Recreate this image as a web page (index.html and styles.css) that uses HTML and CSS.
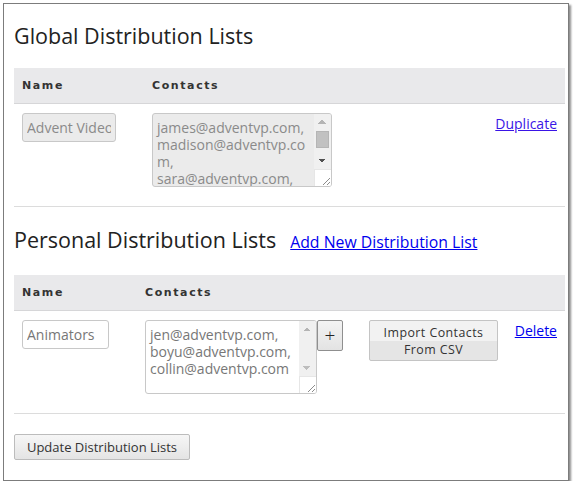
FILE: index.html
```html
<!DOCTYPE html>
<html lang="en">
<head>
<meta charset="utf-8">
<title>Distribution Lists</title>
<link rel="stylesheet" href="styles.css">
</head>
<body>
<div class="window">
  <section class="group">
    <div class="group-head">
      <h2 class="group-title">Global Distribution Lists</h2>
    </div>
    <div class="list list-global">
      <div class="list-header">
        <span class="col-label">Name</span>
        <span class="col-label">Contacts</span>
        <span></span>
      </div>
      <div class="list-row">
        <div class="cell"><input class="name-input" type="text" value="Advent Video Productions" disabled></div>
        <div class="cell">
          <div class="textbox textbox-disabled">
            <textarea class="contacts" disabled>james@adventvp.com, madison@adventvp.com, sara@adventvp.com, jen@adventvp.com, boyu@adventvp.com, collin@adventvp.com</textarea>
            <div class="scrollbar" aria-hidden="true">
              <span class="sb-btn sb-up"></span>
              <span class="sb-track"><span class="sb-thumb"></span></span>
              <span class="sb-btn sb-down sb-active"></span>
              <span class="sb-corner"><svg width="16" height="16" viewBox="0 0 16 16"><path d="M15 8 L8 15 M15 12 L12 15" stroke="#8c8c8c" stroke-width="1" fill="none"/></svg></span>
            </div>
          </div>
        </div>
        <div class="cell cell-action"><a class="action-link action-visited" href="#">Duplicate</a></div>
      </div>
    </div>
  </section>

  <hr class="divider">

  <section class="group">
    <div class="group-head">
      <h2 class="group-title">Personal Distribution Lists</h2>
      <a class="head-link" href="#">Add New Distribution List</a>
    </div>
    <div class="list list-personal">
      <div class="list-header">
        <span class="col-label">Name</span>
        <span class="col-label">Contacts</span>
        <span></span>
        <span></span>
      </div>
      <div class="list-row">
        <div class="cell"><input class="name-input" type="text" value="Animators"></div>
        <div class="cell contacts-cell">
          <div class="textbox textbox-open">
            <textarea class="contacts">jen@adventvp.com,
boyu@adventvp.com,
collin@adventvp.com</textarea>
            <div class="scrollbar" aria-hidden="true">
              <span class="sb-btn sb-up"></span>
              <span class="sb-track"></span>
              <span class="sb-btn sb-down"></span>
              <span class="sb-corner"><svg width="16" height="16" viewBox="0 0 16 16"><path d="M15 8 L8 15 M15 12 L12 15" stroke="#8c8c8c" stroke-width="1" fill="none"/></svg></span>
            </div>
          </div>
          <button class="btn btn-plus" type="button">+</button>
        </div>
        <div class="cell"><button class="btn btn-import" type="button"><span class="btn-line">Import Contacts</span><span class="btn-line">From CSV</span></button></div>
        <div class="cell cell-action"><a class="action-link" href="#">Delete</a></div>
      </div>
    </div>
  </section>

  <hr class="divider">

  <div class="footer">
    <button class="btn btn-update" type="button">Update Distribution Lists</button>
  </div>
</div>
</body>
</html>
```

FILE: styles.css
```css
html, body {
  margin: 0;
  padding: 0;
  background: #ffffff;
}

body {
  font-family: "Open Sans", "DejaVu Sans", sans-serif;
  color: #222;
}

.window {
  box-sizing: border-box;
  margin: 3px 0 0 3px;
  width: 566px;
  height: 478px;
  border: 1px solid #7c7c7c;
  box-shadow: 2px 2px 2px rgba(0, 0, 0, 0.45);
  background: #fff;
  padding: 18px 3px 0 10px;
}

.group-head {
  display: flex;
  align-items: baseline;
  gap: 14px;
}

.group-title {
  margin: 0;
  font-size: 21.5px;
  line-height: 28px;
  font-weight: 400;
  color: #222;
}

.head-link {
  font-size: 15.8px;
  color: #0000ee;
}

.list {
  margin-top: 18px;
}

.list-personal {
  margin-top: 21px;
}

.list-header,
.list-row {
  display: grid;
}

.list-global .list-header,
.list-global .list-row {
  grid-template-columns: 138px 180px 1fr;
}

.list-personal .list-header,
.list-personal .list-row {
  grid-template-columns: 131px 224px 129px 1fr;
}

.list-header {
  height: 36px;
  box-sizing: border-box;
  align-items: center;
  background: #e9e9eb;
  border-bottom: 1px solid #d6d6d8;
}

.col-label {
  font-family: "DejaVu Sans", sans-serif;
  font-size: 11px;
  font-weight: 700;
  letter-spacing: 1.6px;
  color: #333;
}

.list-header .col-label:first-child {
  padding-left: 8px;
}

.list-row {
  padding: 9px 0 19px;
  align-items: start;
}

.list-row .cell:first-child {
  padding-left: 8px;
}

.cell-action {
  text-align: right;
  padding-right: 8px;
  padding-top: 2px;
  line-height: 17px;
}

.action-link {
  font-size: 14px;
  color: #0000ee;
}

.action-visited {
  color: #3a14e6;
}

.name-input {
  box-sizing: border-box;
  height: 29px;
  padding: 0 4px;
  border: 1px solid #c8c8c8;
  border-radius: 3px;
  font-family: inherit;
  font-size: 14px;
  color: #777;
  background: #fff;
  outline: none;
}

.list-global .name-input {
  width: 94px;
  background: #ebebeb;
  color: #8a8a8a;
}

.list-personal .name-input {
  width: 87px;
}

/* textarea with drawn scrollbar */
.textbox {
  box-sizing: border-box;
  display: flex;
  height: 74px;
  border: 1px solid #c8c8c8;
  border-radius: 3px;
  overflow: hidden;
  background: #fff;
}

.textbox-disabled {
  width: 180px;
  background: #ebebeb;
}

.textbox-open {
  width: 172px;
}

.contacts {
  flex: 1;
  min-width: 0;
  box-sizing: border-box;
  height: 100%;
  margin: 0;
  padding: 5px 3px 0 4px;
  border: 0;
  background: transparent;
  font-family: inherit;
  font-size: 14px;
  line-height: 17px;
  color: #777;
  overflow: hidden;
  resize: none;
  outline: none;
}

.textbox-disabled .contacts {
  color: #8a8a8a;
}

.scrollbar {
  flex: 0 0 17px;
  display: flex;
  flex-direction: column;
  background: #f0f0f0;
}

.sb-btn {
  display: block;
  height: 17px;
  background-repeat: no-repeat;
}

.sb-up {
  background-image:
    linear-gradient(to top left, #b4b4b4 50%, transparent 50%),
    linear-gradient(to top right, #b4b4b4 50%, transparent 50%);
  background-size: 4px 4px, 4px 4px;
  background-position: 4px 6px, 8px 6px;
}

.sb-down {
  background-image:
    linear-gradient(to bottom left, #bdbdbd 50%, transparent 50%),
    linear-gradient(to bottom right, #bdbdbd 50%, transparent 50%);
  background-size: 4px 4px, 4px 4px;
  background-position: 4px 7px, 8px 7px;
}

.sb-down.sb-active {
  background-image:
    linear-gradient(to bottom left, #505050 50%, transparent 50%),
    linear-gradient(to bottom right, #505050 50%, transparent 50%);
}

.sb-track {
  display: block;
  height: 21px;
  padding: 0 2px;
}

.sb-thumb {
  display: block;
  height: 17px;
  background: #c1c1c1;
  border: 1px solid #b5b5b5;
  box-sizing: border-box;
}

.sb-corner {
  display: block;
  height: 17px;
  box-sizing: border-box;
  background: #fff;
  border-top: 1px solid #e6e6e6;
  border-left: 1px solid #e6e6e6;
}

.sb-corner svg {
  display: block;
}

.contacts-cell {
  display: flex;
  align-items: flex-start;
}

.btn {
  font-family: inherit;
  color: #333;
  border: 1px solid #b4b4b4;
  border-radius: 2px;
  background: linear-gradient(#f3f3f3, #e3e3e3);
  margin: 0;
  cursor: pointer;
}

.btn-plus {
  box-sizing: border-box;
  width: 26px;
  height: 31px;
  padding: 0;
  font-size: 19px;
  font-weight: 300;
  line-height: 1;
  border-color: #8f8f8f;
  color: #222;
}

.btn-import {
  box-sizing: border-box;
  width: 129px;
  height: 41px;
  padding: 0;
  font-size: 12.4px;
  letter-spacing: 0.45px;
  background: linear-gradient(#f2f2f2 50%, #e5e5e5 50%);
  border-color: #c4c4c4;
  display: flex;
  flex-direction: column;
  align-items: center;
  justify-content: center;
}

.btn-line {
  display: block;
  line-height: 17px;
}

.divider {
  margin: 0;
  border: 0;
  border-top: 1px solid #dcdcdc;
  height: 0;
}

.group + .divider + .group .group-head {
  margin-top: 19px;
}

.footer {
  padding-top: 20px;
}

.btn-update {
  box-sizing: border-box;
  width: 176px;
  height: 26px;
  padding: 0;
  font-size: 13px;
  border-color: #bcbcbc;
  background: linear-gradient(#f6f6f6, #e4e4e4);
}
```
